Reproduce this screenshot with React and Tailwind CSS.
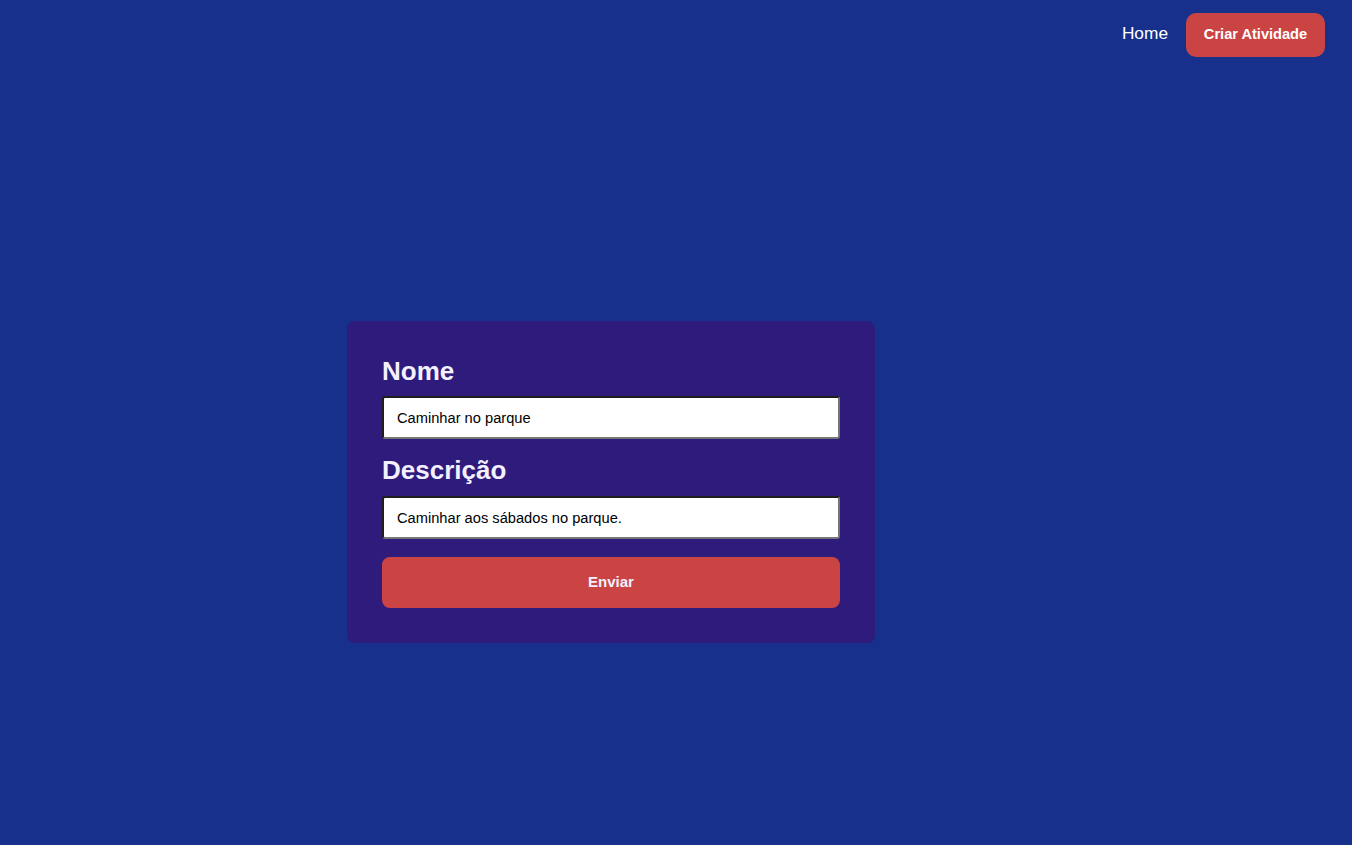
import { useState } from 'react'

export default function App() {
  const [nome, setNome] = useState('Caminhar no parque')
  const [descricao, setDescricao] = useState('Caminhar aos sábados no parque.')

  return (
    <div className="min-h-screen bg-[#17308c] font-['Liberation_Sans',Arial,sans-serif]">
      {/* Nav */}
      <nav className="h-[70px] flex items-center justify-end gap-[18px] pr-[27px]">
        <a href="#" className="text-white text-[17.3px] leading-none -mt-[2px]">Home</a>
        <button className="h-[44px] w-[139px] rounded-[10px] bg-[#cb4444] text-white text-[14.6px] font-bold">
          Criar Atividade
        </button>
      </nav>

      {/* Form */}
      <main className="pl-[347px] pt-[251px]">
        <form
          onSubmit={e => e.preventDefault()}
          className="w-[528px] bg-[#2f1b7c] rounded-lg p-[35px] flex flex-col"
        >
          <label className="text-[#f3f0ff] text-[26px] font-bold leading-[30px] mb-[10px]">Nome</label>
          <input
            value={nome}
            onChange={e => setNome(e.target.value)}
            className="h-[43px] bg-white rounded-[3px] border-2 border-t-[#1e1e1e] border-l-[#1e1e1e] border-b-[#767676] border-r-[#767676] px-[13px] text-[14.67px] text-black outline-none mb-[16px]"
          />
          <label className="text-[#f3f0ff] text-[26px] font-bold leading-[30px] mb-[11px]">Descrição</label>
          <input
            value={descricao}
            onChange={e => setDescricao(e.target.value)}
            className="h-[43px] bg-white rounded-[3px] border-2 border-t-[#1e1e1e] border-l-[#1e1e1e] border-b-[#767676] border-r-[#767676] px-[13px] text-[14.67px] text-black outline-none"
          />
          <button type="submit" className="mt-[18px] h-[51px] rounded-lg bg-[#cb4444] text-[#f3f0ff] text-[15px] font-bold">
            Enviar
          </button>
        </form>
      </main>
    </div>
  )
}
